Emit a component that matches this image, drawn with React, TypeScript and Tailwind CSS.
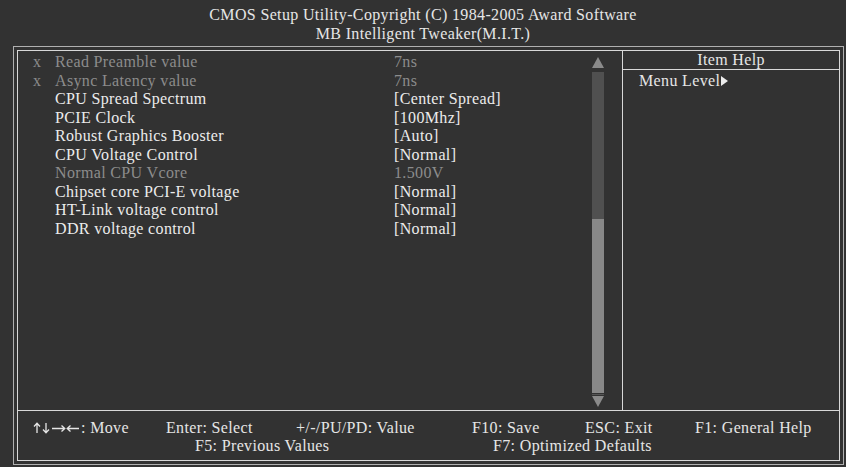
type Row = {
  x?: boolean;
  label: string;
  value: string;
  dim?: boolean;
};

const rows: Row[] = [
  { x: true, label: "Read Preamble value", value: "7ns", dim: true },
  { x: true, label: "Async Latency value", value: "7ns", dim: true },
  { label: "CPU Spread Spectrum", value: "[Center Spread]" },
  { label: "PCIE Clock", value: "[100Mhz]" },
  { label: "Robust Graphics Booster", value: "[Auto]" },
  { label: "CPU Voltage Control", value: "[Normal]" },
  { label: "Normal CPU Vcore", value: "1.500V", dim: true },
  { label: "Chipset core PCI-E voltage", value: "[Normal]" },
  { label: "HT-Link voltage control", value: "[Normal]" },
  { label: "DDR voltage control", value: "[Normal]" },
];

const ScrollBar = () => {
  return (
    <div className="flex flex-col items-center w-[12px] mr-[18px] pt-[6px]">
      <svg width="12" height="11" viewBox="0 0 12 11">
        <polygon points="6,0 12,11 0,11" fill="#8a8a8a" />
      </svg>
      <div className="w-[12px] h-[147px] mt-[4px] bg-[#505050]" />
      <div className="w-[12px] h-[174px] bg-[#888888]" />
      <svg className="mt-[1px]" width="12" height="13" viewBox="0 0 12 13">
        <rect x="0" y="0" width="12" height="1" fill="#555555" />
        <polygon points="0,2 12,2 6,13" fill="#8a8a8a" />
      </svg>
    </div>
  );
};

// the four cursor keys glyph of the footer
const Arrows = () => {
  return (
    <svg
      className="inline-block mr-[1px] align-[-1px]"
      width="47"
      height="12"
      viewBox="0 0 47 12"
      fill="none"
      stroke="#e6e6e6"
      strokeWidth="1.3"
    >
      <path d="M4 11V1.5M1 4.5L4 1.2L7 4.5" />
      <path d="M13 1v9.5M10 7.5L13 10.8L16 7.5" />
      <path d="M19 6.5h12.5M28.5 3.5L31.8 6.5L28.5 9.5" />
      <path d="M46 6.5H34.5M37.5 3.5L34.2 6.5L37.5 9.5" />
    </svg>
  );
};

const App = () => {
  return (
    <div
      className="w-[846px] h-[467px] bg-[#323232] text-[#e6e6e6] text-[16px] tracking-[0.35px] overflow-hidden"
      style={{ fontFamily: '"Liberation Serif", "Times New Roman", serif' }}
    >
      <div className="pt-[5px] text-center leading-[19px]">
        <p>CMOS Setup Utility-Copyright (C) 1984-2005 Award Software</p>
        <p>MB Intelligent Tweaker(M.I.T.)</p>
      </div>

      <div className="ml-[13px] mt-[3px] w-[831px] h-[419px] border border-[#b0b0b0] p-[3px]">
        <div className="h-full border border-[#d8d8d8] flex flex-col">
          {/* main area */}
          <div className="h-[359px] flex">
            <div className="flex-1 flex">
              <div className="flex-1 pt-[2px] pl-[15px]">
                {rows.map(r => (
                  <div
                    key={r.label}
                    className={`flex h-[18.5px] leading-[18.5px] ${r.dim ? "text-[#8c8c8c]" : "text-[#ececec]"}`}
                  >
                    <span className="w-[22px]">{r.x ? "x" : ""}</span>
                    <span className="w-[339px]">{r.label}</span>
                    <span>{r.value}</span>
                  </div>
                ))}
              </div>
              <ScrollBar />
            </div>
            <div className="w-[217px] border-l border-[#d8d8d8]">
              <div className="h-[19px] border-b border-[#d8d8d8] text-center leading-[18px]">
                Item Help
              </div>
              <div className="pl-[16px] pt-[1px] leading-[20px] flex items-center">
                Menu Level
                <svg className="ml-[1px]" width="7" height="10" viewBox="0 0 7 10">
                  <polygon points="0,0 7,5 0,10" fill="#ececec" />
                </svg>
              </div>
            </div>
          </div>

          {/* footer */}
          <div className="flex-1 border-t border-[#d8d8d8] pt-[8px] pl-[15px] leading-[18px] text-[#e6e6e6]">
            <div className="flex">
              <span className="w-[133px]">
                <Arrows />: Move
              </span>
              <span className="w-[130px]">Enter: Select</span>
              <span className="w-[176px]">+/-/PU/PD: Value</span>
              <span className="w-[113px]">F10: Save</span>
              <span className="w-[110px]">ESC: Exit</span>
              <span>F1: General Help</span>
            </div>
            <div className="flex">
              <span className="ml-[162px] w-[298px]">F5: Previous Values</span>
              <span>F7: Optimized Defaults</span>
            </div>
          </div>
        </div>
      </div>
    </div>
  );
};

export default App;
